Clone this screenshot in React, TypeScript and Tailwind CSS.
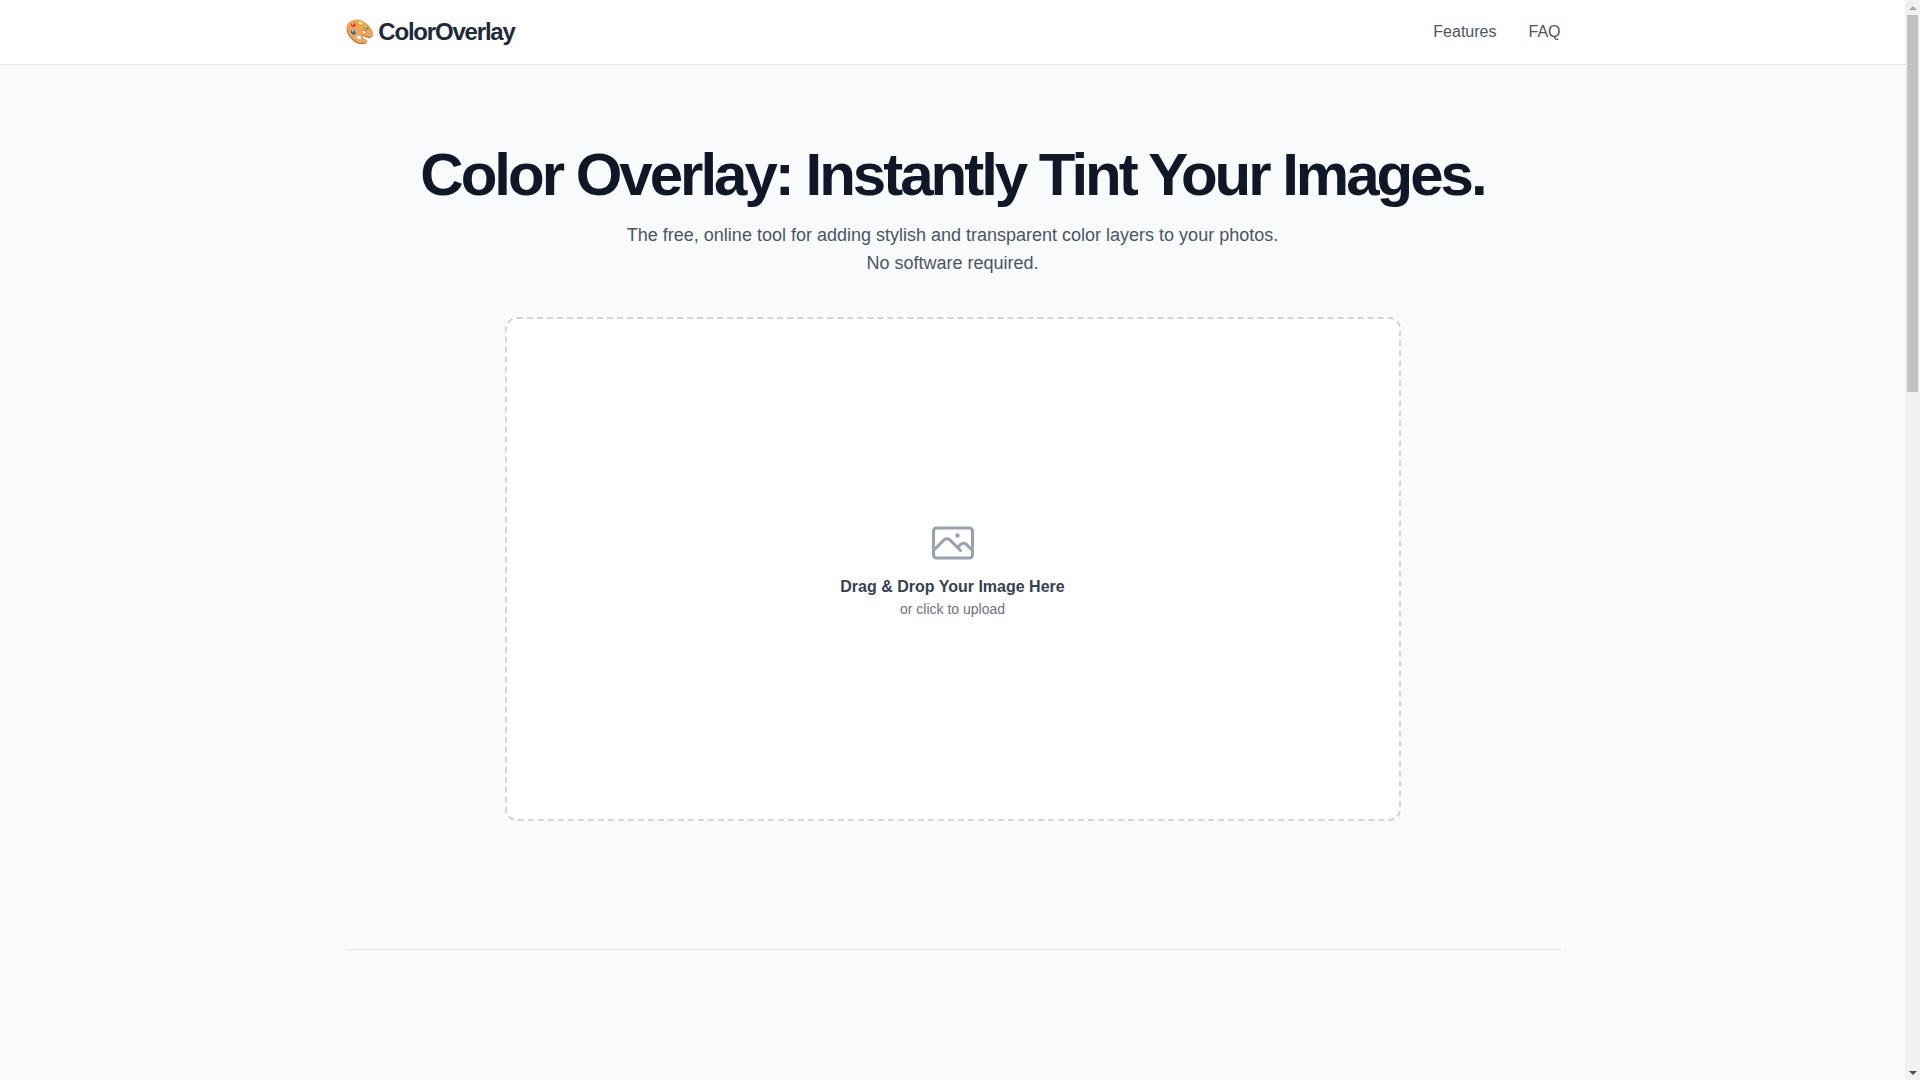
function Scrollbar() {
  return (
    <aside className="w-[15px] h-full shrink-0 bg-[#f1f1f1] flex flex-col items-center">
      <div className="h-[15px] flex items-center justify-center">
        <div className="w-0 h-0 border-x-[4px] border-x-transparent border-b-[4px] border-b-[#a3a3a3]" />
      </div>
      <div className="w-[11px] h-[377px] bg-[#c1c1c1]" />
      <div className="flex-1" />
      <div className="h-[15px] flex items-center justify-center">
        <div className="w-0 h-0 border-x-[4px] border-x-transparent border-t-[4px] border-t-[#505050]" />
      </div>
    </aside>
  );
}

export default function App() {
  return (
    <div className="flex h-screen overflow-hidden font-['Liberation_Sans',sans-serif]">
      <div className="flex-1 min-w-0 bg-gray-50 text-gray-800">
        {/* Header */}
        <header className="bg-white border-b border-gray-200">
          <nav className="max-w-7xl mx-auto px-8 h-16 flex items-center justify-between">
            <div className="flex items-center gap-[5px] text-2xl font-bold tracking-tighter text-gray-800">
              <span>🎨</span>
              <span>ColorOverlay</span>
            </div>
            <div className="flex items-center gap-8 text-base text-gray-600">
              <a>Features</a>
              <a>FAQ</a>
            </div>
          </nav>
        </header>

        <main className="max-w-7xl mx-auto px-8">
          {/* Hero */}
          <section className="pt-20 pb-32 text-center">
            <h1 className="text-6xl font-bold tracking-tighter text-gray-900">
              Color Overlay: Instantly Tint Your Images.
            </h1>
            <p className="mt-4 text-lg text-gray-600">
              The free, online tool for adding stylish and transparent color layers to your photos.
              <br />
              No software required.
            </p>

            {/* Upload */}
            <div className="mt-10 mx-auto max-w-4xl h-[504px] bg-white border-2 border-dashed border-gray-300 rounded-xl flex flex-col items-center justify-center">
              <svg className="w-12 h-12 text-gray-400" fill="none" viewBox="0 0 24 24" strokeWidth={1.5} stroke="currentColor">
                <path
                  strokeLinecap="round"
                  strokeLinejoin="round"
                  d="M2.25 15.75l5.159-5.159a2.25 2.25 0 013.182 0l5.159 5.159m-1.5-1.5l1.409-1.409a2.25 2.25 0 013.182 0l2.909 2.909m-18 3.75h16.5a1.5 1.5 0 001.5-1.5V6a1.5 1.5 0 00-1.5-1.5H3.75A1.5 1.5 0 002.25 6v12a1.5 1.5 0 001.5 1.5zm10.5-11.25h.008v.008h-.008V8.25zm.375 0a.375.375 0 11-.75 0 .375.375 0 01.75 0z"
                />
              </svg>
              <p className="mt-2 font-semibold text-gray-700">Drag &amp; Drop Your Image Here</p>
              <p className="text-sm text-gray-500">or click to upload</p>
            </div>
          </section>

          <hr className="border-gray-200" />
        </main>
      </div>
      <Scrollbar />
    </div>
  );
}
